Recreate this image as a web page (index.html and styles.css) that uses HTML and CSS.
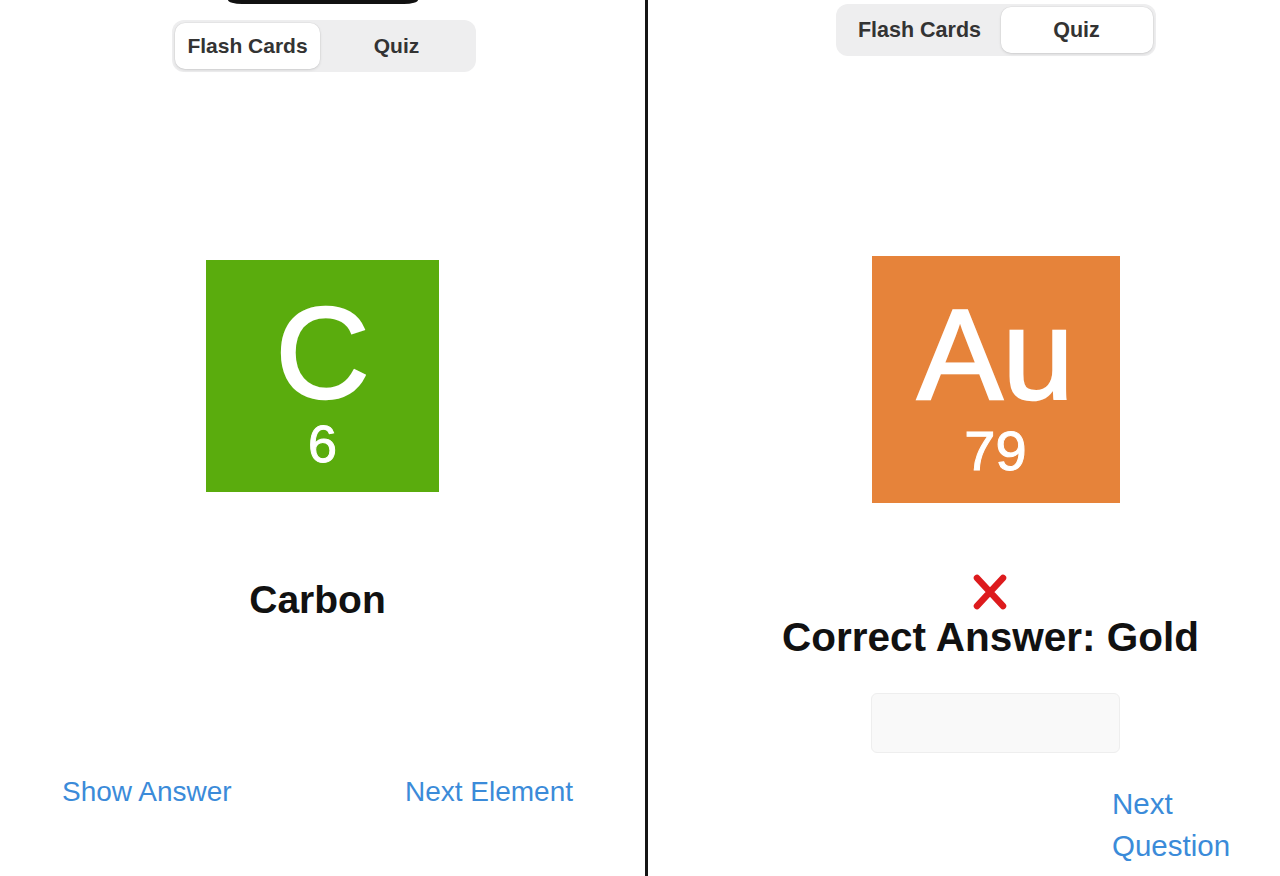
FILE: index.html
```html
<!DOCTYPE html>
<html lang="en">
<head>
<meta charset="utf-8">
<title>Elements</title>
<link rel="stylesheet" href="styles.css">
</head>
<body>
<div class="screens">
  <section class="panel panel-left">
    <div class="notch"></div>
    <div class="segmented seg-left">
      <div class="seg seg-a selected">Flash Cards</div>
      <div class="seg seg-b">Quiz</div>
    </div>
    <div class="tile tile-carbon">
      <div class="symbol">C</div>
      <div class="number">6</div>
    </div>
    <div class="element-name">Carbon</div>
    <div class="actions">
      <span class="link">Show Answer</span>
      <span class="link">Next Element</span>
    </div>
  </section>
  <section class="panel panel-right">
    <div class="segmented seg-right">
      <div class="seg seg-c">Flash Cards</div>
      <div class="seg seg-d selected">Quiz</div>
    </div>
    <div class="tile tile-gold">
      <div class="symbol">Au</div>
      <div class="number">79</div>
    </div>
    <svg class="wrong" viewBox="0 0 40 38" width="40" height="38" aria-hidden="true">
      <path d="M7 5 L33 33 M33 5 L7 33" stroke="#dd1b1d" stroke-width="6.5" stroke-linecap="round" fill="none"/>
    </svg>
    <div class="answer">Correct Answer: Gold</div>
    <div class="field"></div>
    <span class="link next-q">Next Question</span>
  </section>
</div>
</body>
</html>
```
FILE: styles.css
```css
html, body {
  margin: 0;
  padding: 0;
  background: #ffffff;
}
body {
  width: 1280px;
  height: 876px;
  overflow: hidden;
  font-family: "Liberation Sans", Arial, sans-serif;
  color: #111;
}
.screens {
  display: flex;
  height: 876px;
}
.panel {
  display: flex;
  flex-direction: column;
  align-items: center;
}
.panel-left {
  width: 645px;
  border-right: 3px solid #151515;
}
.panel-right {
  flex: 1;
  padding-left: 63px;
}
.notch {
  width: 190px;
  height: 4px;
  background: #111;
  border-radius: 0 0 14px 14px / 0 0 4px 4px;
}
.segmented {
  display: flex;
  height: 52px;
  padding: 3px;
  box-sizing: border-box;
  background: #eeeeef;
  border-radius: 12px;
}
.seg-left {
  margin-top: 16px;
  width: 304px;
  margin-left: 3px;
}
.seg-right {
  margin-top: 4px;
  width: 320px;
}
.seg {
  display: flex;
  align-items: center;
  justify-content: center;
  font-size: 21px;
  font-weight: 600;
  color: #333333;
  border-radius: 10px;
}
.seg-right .seg {
  font-size: 21.5px;
}
.seg.selected {
  background: #ffffff;
  box-shadow: 0 1px 3px rgba(0, 0, 0, 0.12), 0 0 0 0.5px rgba(0, 0, 0, 0.05);
}
.seg-a { width: 145px; }
.seg-b { flex: 1; }
.seg-c { width: 162px; }
.seg-d { flex: 1; }
.tile {
  display: flex;
  flex-direction: column;
  align-items: center;
  color: #ffffff;
  box-sizing: border-box;
}
.tile .symbol, .tile .number {
  line-height: 1;
}
.tile .symbol {
  -webkit-text-stroke: 2.5px #ffffff;
}
.tile .number {
  -webkit-text-stroke: 1px #ffffff;
}
.tile-carbon {
  margin-top: 188px;
  width: 233px;
  height: 232px;
  padding-top: 28px;
  background: #5aac0d;
}
.tile-carbon .symbol { font-size: 130px; }
.tile-carbon .number { font-size: 52px; margin-top: 0; }
.tile-gold {
  margin-top: 200px;
  width: 248px;
  height: 247px;
  padding-top: 35px;
  background: #e6833a;
}
.tile-gold .symbol { font-size: 128px; }
.tile-gold .number { font-size: 56px; margin-top: 4px; }
.element-name {
  margin-top: 88px;
  margin-right: 10px;
  font-size: 39px;
  font-weight: 700;
  line-height: 1;
  color: #111;
}
.actions {
  margin-top: 159px;
  align-self: stretch;
  display: flex;
  justify-content: space-between;
  padding: 0 72px 0 62px;
}
.link {
  font-size: 28px;
  line-height: 1;
  color: #3b8bd9;
}
.wrong {
  display: block;
  margin-top: 70px;
  margin-right: 12px;
}
.answer {
  margin-top: 6px;
  margin-right: 10px;
  font-size: 40.5px;
  font-weight: 700;
  line-height: 1;
  color: #111;
  white-space: nowrap;
}
.field {
  margin-top: 35px;
  width: 249px;
  height: 60px;
  box-sizing: border-box;
  background: #f9f9f9;
  border: 1px solid #eeeeee;
  border-radius: 6px;
}
.next-q {
  align-self: flex-start;
  margin-left: 401px;
  margin-top: 30px;
  width: 130px;
  font-size: 29.5px;
  line-height: 42px;
}
```
